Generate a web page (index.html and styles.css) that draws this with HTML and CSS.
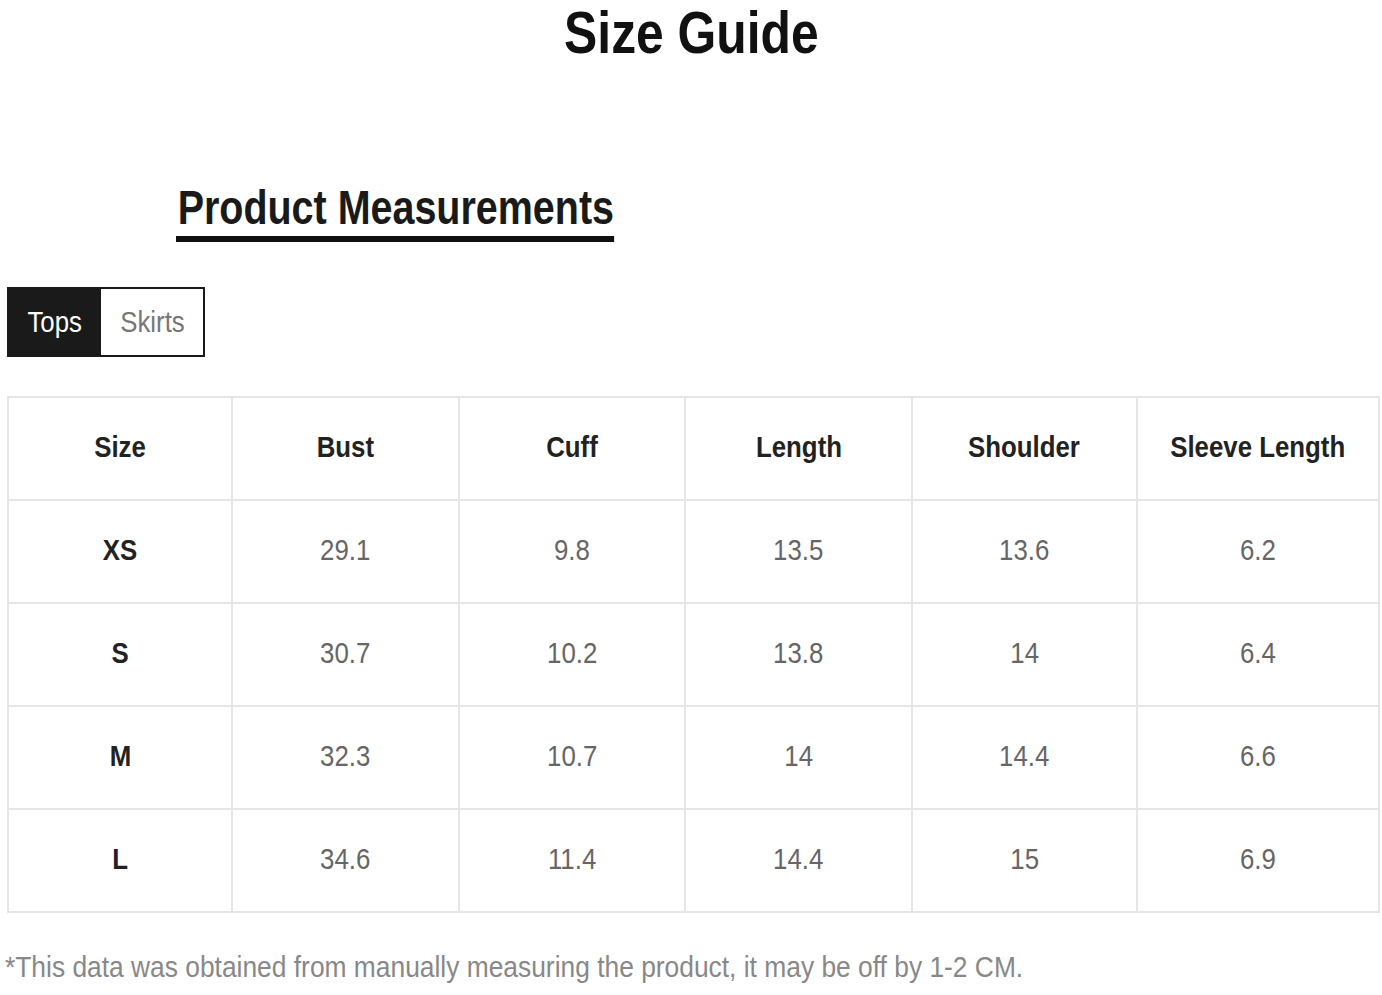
FILE: index.html
```html
<!DOCTYPE html>
<html lang="en">
<head>
<meta charset="utf-8">
<title>Size Guide</title>
<link rel="stylesheet" href="styles.css">
</head>
<body>
<div class="page">
  <h1 class="title"><span class="narrow title-text">Size Guide</span></h1>
  <div class="section-head">
    <h2 class="section-title">Product Measurements</h2>
  </div>
  <div class="tabs">
    <div class="tab tab-active"><span class="narrow">Tops</span></div>
    <div class="tab tab-plain"><span class="narrow">Skirts</span></div>
  </div>
  <table class="size-table">
    <colgroup>
      <col class="c1"><col class="c2"><col class="c3"><col class="c4"><col class="c5"><col class="c6">
    </colgroup>
    <thead>
      <tr><th><span class="narrow">Size</span></th><th><span class="narrow">Bust</span></th><th><span class="narrow">Cuff</span></th><th><span class="narrow">Length</span></th><th><span class="narrow">Shoulder</span></th><th><span class="narrow">Sleeve Length</span></th></tr>
    </thead>
    <tbody>
      <tr><th><span class="narrow">XS</span></th><td><span class="narrow">29.1</span></td><td><span class="narrow">9.8</span></td><td><span class="narrow">13.5</span></td><td><span class="narrow">13.6</span></td><td><span class="narrow">6.2</span></td></tr>
      <tr><th><span class="narrow">S</span></th><td><span class="narrow">30.7</span></td><td><span class="narrow">10.2</span></td><td><span class="narrow">13.8</span></td><td><span class="narrow">14</span></td><td><span class="narrow">6.4</span></td></tr>
      <tr><th><span class="narrow">M</span></th><td><span class="narrow">32.3</span></td><td><span class="narrow">10.7</span></td><td><span class="narrow">14</span></td><td><span class="narrow">14.4</span></td><td><span class="narrow">6.6</span></td></tr>
      <tr><th><span class="narrow">L</span></th><td><span class="narrow">34.6</span></td><td><span class="narrow">11.4</span></td><td><span class="narrow">14.4</span></td><td><span class="narrow">15</span></td><td><span class="narrow">6.9</span></td></tr>
    </tbody>
  </table>
  <p class="note">*This data was obtained from manually measuring the product, it may be off by 1-2 CM.</p>
</div>
</body>
</html>
```
FILE: styles.css
```css
html, body {
  margin: 0;
  padding: 0;
  background: #ffffff;
}
body {
  font-family: "Liberation Sans", Arial, sans-serif;
  color: #1a1a1a;
}
.page {
  width: 1382px;
  height: 995px;
  overflow: hidden;
}
.narrow {
  display: inline-block;
  transform: scaleX(0.86);
  transform-origin: center center;
  white-space: nowrap;
}
.title {
  margin: 0;
  padding-top: 2px;
  font-size: 60px;
  line-height: 62px;
  font-weight: bold;
  text-align: center;
  color: #111;
}
.title .title-text {
  transform: scaleX(0.83);
}
.section-head {
  margin-top: 120px;
  padding-left: 176px;
}
.section-title {
  display: inline-block;
  margin: 0;
  font-size: 48px;
  line-height: 48px;
  font-weight: bold;
  color: #1a1a1a;
  padding: 0 0 4px 2px;
  border-bottom: 6px solid #111;
  transform: scaleX(0.822);
  transform-origin: left center;
  white-space: nowrap;
}
.tabs {
  display: inline-flex;
  margin: 45px 0 0 7px;
  border: 2px solid #1a1a1a;
  height: 66px;
}
.tab {
  display: flex;
  align-items: center;
  justify-content: center;
  font-size: 30px;
  color: #777;
  background: #fff;
}
.tab-active {
  width: 92px;
  background: #1a1a1a;
  color: #fff;
}
.tab-plain {
  width: 102px;
}
.size-table {
  margin: 39px 0 0 7px;
  width: 1371px;
  border-collapse: collapse;
  table-layout: fixed;
}
.c1 { width: 224px; }
.c2 { width: 227px; }
.c3 { width: 226px; }
.c4 { width: 227px; }
.c5 { width: 225px; }
.c6 { width: 242px; }
.size-table th,
.size-table td {
  border: 2px solid #e6e6e6;
  height: 98px;
  padding: 0 0 3px 0;
  text-align: center;
  vertical-align: middle;
  font-size: 30px;
  line-height: 34px;
}
.size-table th {
  font-weight: bold;
  color: #222;
}
.size-table td {
  font-weight: normal;
  color: #666;
}
.note {
  display: inline-block;
  margin: 39px 0 0 5px;
  font-size: 30px;
  line-height: 30px;
  color: #888;
  white-space: nowrap;
  transform: scaleX(0.879);
  transform-origin: left center;
}
```
